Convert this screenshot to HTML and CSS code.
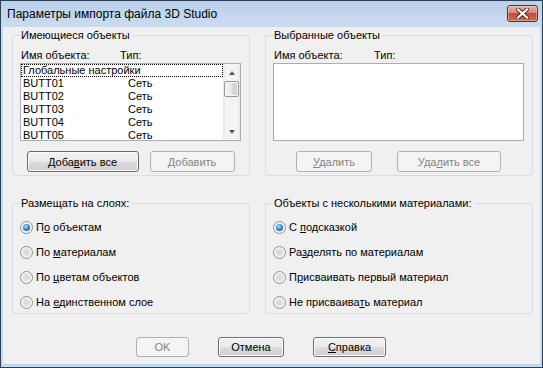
FILE: index.html
```html
<!DOCTYPE html>
<html>
<head>
<meta charset="utf-8" />
<title>Параметры импорта файла 3D Studio</title>
<link rel="stylesheet" href="styles.css">
</head>
<body>
<div class="window">
  <div class="titlebar">
    <span class="caption">Параметры импорта файла 3D Studio</span>
    <button class="close" title="Закрыть">
      <svg width="13" height="11" viewBox="0 0 13 11">
        <path d="M2 1.5 L11 9.5 M11 1.5 L2 9.5" stroke="#5a2520" stroke-width="4.2" stroke-linecap="square" fill="none"/>
        <path d="M2 1.5 L11 9.5 M11 1.5 L2 9.5" stroke="#fff" stroke-width="2.2" stroke-linecap="square" fill="none"/>
      </svg>
    </button>
  </div>

  <div class="client">
    <div class="groups">
      <fieldset class="group source">
        <legend>Имеющиеся объекты</legend>
        <div class="columns"><span>Имя объекта:</span><span>Тип:</span></div>
        <div class="listbox">
          <ul class="items">
            <li class="focus"><span>Глобальные настройки</span></li>
            <li><span>BUTT01</span><span>Сеть</span></li>
            <li><span>BUTT02</span><span>Сеть</span></li>
            <li><span>BUTT03</span><span>Сеть</span></li>
            <li><span>BUTT04</span><span>Сеть</span></li>
            <li><span>BUTT05</span><span>Сеть</span></li>
          </ul>
          <div class="scrollbar">
            <span class="arrow"><i class="up"></i></span>
            <span class="thumb"></span>
            <span class="track"></span>
            <span class="arrow"><i class="down"></i></span>
          </div>
        </div>
        <div class="actions">
          <button class="btn default add-all">Доба<u>в</u>ить все</button>
          <button class="btn add" disabled><u>Д</u>обавить</button>
        </div>
      </fieldset>

      <fieldset class="group target">
        <legend>Выбранные объекты</legend>
        <div class="columns"><span>Имя объекта:</span><span>Тип:</span></div>
        <div class="listbox"></div>
        <div class="actions">
          <button class="btn remove" disabled><u>У</u>далить</button>
          <button class="btn remove-all" disabled>Уда<u>л</u>ить все</button>
        </div>
      </fieldset>

      <fieldset class="group">
        <legend>Размещать на слоях:</legend>
        <div class="options">
          <label class="option"><span class="radio checked"></span><span>П<u>о</u> объектам</span></label>
          <label class="option"><span class="radio"></span><span>По <u>м</u>атериалам</span></label>
          <label class="option"><span class="radio"></span><span>По <u>ц</u>ветам объектов</span></label>
          <label class="option"><span class="radio"></span><span>На <u>е</u>динственном слое</span></label>
        </div>
      </fieldset>

      <fieldset class="group">
        <legend>Объекты с несколькими материалами:</legend>
        <div class="options">
          <label class="option"><span class="radio checked"></span><span>С <u>п</u>одсказкой</span></label>
          <label class="option"><span class="radio"></span><span>Ра<u>з</u>делять по материалам</span></label>
          <label class="option"><span class="radio"></span><span>П<u>р</u>исваивать первый материал</span></label>
          <label class="option"><span class="radio"></span><span>Не присваива<u>т</u>ь материал</span></label>
        </div>
      </fieldset>
    </div>

    <div class="buttons">
      <button class="btn ok" disabled>OK</button>
      <button class="btn cancel">Отмена</button>
      <button class="btn help"><u>С</u>правка</button>
    </div>
  </div>
</div>
</body>
</html>
```

FILE: styles.css
```css
* {
  box-sizing: border-box;
}
html, body {
  margin: 0;
  height: 100%;
}
body {
  font: 11px "Liberation Sans", Arial, sans-serif;
  color: #000;
  background: #fff;
}
u {
  text-decoration: underline;
  text-underline-offset: 1px;
}
.window {
  width: 543px;
  height: 368px;
  display: flex;
  flex-direction: column;
  border: 1px solid #2d3f55;
  background: #c4daf1;
}
.titlebar {
  height: 26px;
  display: flex;
  align-items: flex-start;
  background: linear-gradient(#bad0ea, #cbdcef);
}
.caption {
  flex: 1;
  font-size: 12px;
  line-height: 27px;
  padding-left: 6px;
  white-space: nowrap;
}
.close {
  width: 31px;
  height: 17px;
  margin: 4px 4px 0 0;
  padding: 0;
  display: flex;
  align-items: center;
  justify-content: center;
  border: 1px solid #6b2a24;
  border-radius: 3px;
  background: linear-gradient(#eab0a2 0%, #dc8a78 45%, #c8493a 50%, #d8664f 100%);
  box-shadow: inset 0 0 0 1px rgba(255, 255, 255, .35);
}
.client {
  flex: 1;
  margin: 0 2px 2px;
  padding: 1px 7px 0 9px;
  background: #f0f0f0;
  border-bottom: 1px solid #b7d3ea;
}
.groups {
  display: grid;
  grid-template-columns: 238px 268px;
  column-gap: 15px;
  row-gap: 20px;
}
.group {
  margin: 0;
  min-width: 0;
  padding: 0 8px 3px 7px;
  border: 1px solid #d5dfe5;
  border-radius: 3px;
}
.group > legend {
  padding: 0 2px 0 1px;
  line-height: 14px;
}
.columns {
  display: flex;
  margin-top: 7px;
  line-height: 13px;
  padding-left: 1px;
}
.columns > span:first-child {
  width: 99px;
}
.target .columns > span:first-child {
  width: 100px;
}
.listbox {
  height: 78px;
  margin-top: 1px;
  display: flex;
  border: 1px solid #abadb3;
  background: #fff;
}
.items {
  flex: 1;
  list-style: none;
  margin: 0;
  padding: 0;
}
.items > li {
  display: flex;
  height: 13px;
  line-height: 13px;
  padding-left: 2px;
  white-space: nowrap;
}
.items > li > span:first-child {
  width: 105px;
}
.items > li.focus {
  outline: 1px dotted #000;
  outline-offset: -1px;
}
.scrollbar {
  width: 17px;
  display: flex;
  flex-direction: column;
  background: linear-gradient(90deg, #e9e9eb, #f4f4f4 20%, #f4f4f4 80%, #e9e9eb);
}
.scrollbar > .arrow {
  height: 17px;
  display: flex;
  align-items: center;
  justify-content: center;
}
.scrollbar i {
  width: 0;
  height: 0;
  border-left: 3.5px solid transparent;
  border-right: 3.5px solid transparent;
}
.scrollbar i.up {
  border-bottom: 4px solid #5a5a5a;
}
.scrollbar i.down {
  border-top: 4px solid #5a5a5a;
}
.scrollbar > .thumb {
  height: 16px;
  margin: 0 1px;
  border: 1px solid #979797;
  border-radius: 2px;
  background: linear-gradient(90deg, #f5f5f5, #e6e6e6 50%, #d9d9d9 51%, #cfcfcf);
  box-shadow: inset 0 0 0 1px #f8f8f8;
}
.scrollbar > .track {
  flex: 1;
}
.actions {
  display: flex;
  justify-content: center;
  gap: 11px;
  margin-top: 10px;
}
.target .actions {
  gap: 25px;
}
.btn {
  height: 21px;
  padding: 0;
  font: 11px "Liberation Sans", Arial, sans-serif;
  color: #000;
  border: 1px solid #707070;
  border-radius: 3px;
  background: linear-gradient(#f2f2f2 0%, #ebebeb 48%, #dddddd 52%, #cfcfcf 100%);
  box-shadow: inset 0 0 0 1px #fbfbfb;
}
.btn:disabled {
  color: #838383;
  border-color: #adb2b5;
  background: #f4f4f4;
  box-shadow: none;
}
.btn.default {
  border-color: #6a6a6a;
}
.add-all {
  width: 112px;
}
.add {
  width: 85px;
}
.remove {
  width: 76px;
}
.remove-all {
  width: 104px;
}
.options {
  display: flex;
  flex-direction: column;
  gap: 12px;
  padding-top: 11px;
  padding-bottom: 1px;
}
.option {
  display: flex;
  align-items: center;
  height: 13px;
  line-height: 13px;
  white-space: nowrap;
}
.radio {
  flex: none;
  width: 13px;
  height: 13px;
  margin-right: 3px;
  border: 1px solid #8e8f8f;
  border-radius: 50%;
  background: radial-gradient(circle at 50% 50%, #d6d6d6 0, #e4e4e4 45%, #fbfbfb 70%);
  display: flex;
  align-items: center;
  justify-content: center;
}
.radio.checked::after {
  content: "";
  width: 7px;
  height: 7px;
  border-radius: 50%;
  background: radial-gradient(circle at 40% 35%, #b5e2fb 0, #3a8fd4 45%, #0f4f92 100%);
}
.buttons {
  display: flex;
  gap: 29px;
  margin-top: 23px;
  padding-left: 124px;
}
.buttons .btn {
  height: 20px;
}
.ok {
  width: 53px;
}
.cancel {
  width: 66px;
}
.help {
  width: 73px;
}
```
